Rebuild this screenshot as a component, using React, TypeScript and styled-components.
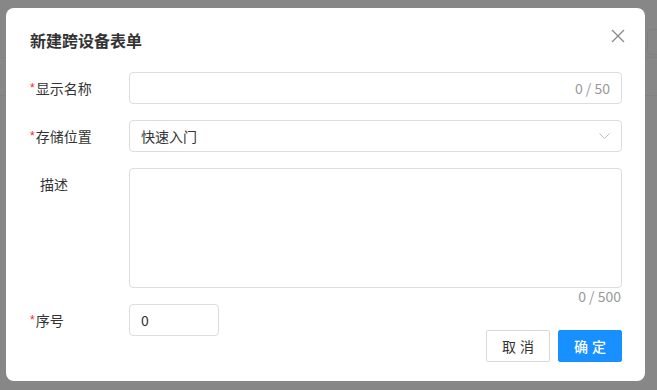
import React from 'react';
import styled, { createGlobalStyle } from 'styled-components';

const GlobalStyle = createGlobalStyle`
  html, body {
    margin: 0;
    padding: 0;
    width: 657px;
    height: 390px;
    overflow: hidden;
    font-family: "Noto Sans CJK SC", "Noto Sans", sans-serif;
  }
`;

const Page = styled.div`
  width: 657px;
  height: 390px;
  background: #878787;
  position: relative;
`;

const PageHeader = styled.div`
  height: 57px;
  border-bottom: 1px solid #818181;
`;

const PageBar = styled.div`
  height: 37px;
  border-bottom: 1px solid #818181;
`;

const HeaderButton = styled.div`
  position: absolute;
  left: 647px;
  top: 29px;
  width: 40px;
  height: 24px;
  border: 1px solid #808080;
  border-radius: 4px;
`;

const Overlay = styled.div`
  position: fixed;
  inset: 0;
  display: flex;
  align-items: flex-start;
  padding: 8px 0 0 6px;
`;

const Modal = styled.div`
  position: relative;
  width: 639px;
  height: 373px;
  box-sizing: border-box;
  background: #fff;
  border-radius: 8px;
  padding: 22px 23px 19px 24px;
  display: flex;
  flex-direction: column;
`;

const Title = styled.div`
  font-size: 16px;
  line-height: 20px;
  height: 20px;
  font-weight: 700;
  color: #333;
  margin-bottom: 22px;
`;

const Close = styled.button`
  position: absolute;
  right: 20px;
  top: 21px;
  width: 14px;
  height: 14px;
  padding: 0;
  border: 0;
  background: none;
  cursor: pointer;
  display: flex;
`;

const Row = styled.div<{ $gap?: number }>`
  display: grid;
  grid-template-columns: 99px 1fr;
  align-items: start;
  margin-bottom: ${(p) => (p.$gap ?? 16)}px;
`;

const Label = styled.label<{ $required?: boolean }>`
  display: flex;
  align-items: center;
  height: 32px;
  font-size: 14px;
  color: #333;
  padding-left: ${(p) => (p.$required ? 0 : 10)}px;
  white-space: nowrap;
`;

const Star = styled.span`
  color: #f5222d;
  font-size: 12px;
  line-height: 1;
  margin-right: 1px;
  font-family: "Liberation Sans", sans-serif;
`;

const Field = styled.div<{ $width?: number; $height?: number }>`
  box-sizing: border-box;
  width: ${(p) => (p.$width ? `${p.$width}px` : '100%')};
  height: ${(p) => p.$height ?? 32}px;
  border: 1px solid #dcdcdc;
  border-radius: 4px;
  display: flex;
  align-items: center;
  justify-content: space-between;
  padding: 0 11px 0 11px;
  font-size: 14px;
  color: #333;
`;

const Count = styled.span`
  color: #999;
  font-size: 14px;
`;

const Below = styled.div`
  text-align: right;
  line-height: 16px;
  height: 16px;
  color: #999;
  font-size: 14px;
  padding-right: 1px;
`;

const Bottom = styled.div`
  display: flex;
  justify-content: space-between;
  align-items: flex-end;
  height: 58px;
  margin-top: auto;
`;

const Buttons = styled.div`
  display: flex;
  gap: 8px;
`;

const Button = styled.button<{ $primary?: boolean }>`
  width: 64px;
  height: 32px;
  box-sizing: border-box;
  padding: 0 0 0 4px;
  border-radius: 2px;
  font-family: inherit;
  font-size: 14px;
  letter-spacing: 4px;
  cursor: pointer;
  border: 1px solid ${(p) => (p.$primary ? '#1890ff' : '#d9d9d9')};
  background: ${(p) => (p.$primary ? '#1890ff' : '#fff')};
  color: ${(p) => (p.$primary ? '#fff' : '#333')};
  font-weight: ${(p) => (p.$primary ? 500 : 400)};
`;

export default function App() {
  return (
    <>
      <GlobalStyle />
      <Page>
        <PageHeader />
        <PageBar />
        <HeaderButton />
        <Overlay>
          <Modal>
            <Title>新建跨设备表单</Title>
            <Close aria-label="close">
              <svg width="14" height="14" viewBox="0 0 14 14">
                <path d="M1 1L13 13M13 1L1 13" stroke="#888" strokeWidth="1.3" fill="none" />
              </svg>
            </Close>

            <Row>
              <Label $required>
                <Star>*</Star>显示名称
              </Label>
              <Field>
                <span />
                <Count>0 / 50</Count>
              </Field>
            </Row>

            <Row>
              <Label $required>
                <Star>*</Star>存储位置
              </Label>
              <Field>
                <span>快速入门</span>
                <svg width="11" height="6" viewBox="0 0 11 6">
                  <path d="M0.5 0.5L5.5 5.5L10.5 0.5" stroke="#bbb" strokeWidth="1" fill="none" />
                </svg>
              </Field>
            </Row>

            <Row $gap={0}>
              <Label>描述</Label>
              <div>
                <Field $height={120} />
                <Below>0 / 500</Below>
              </div>
            </Row>

            <Bottom>
              <Row $gap={26}>
                <Label $required>
                  <Star>*</Star>序号
                </Label>
                <Field $width={90}>
                  <span>0</span>
                </Field>
              </Row>
              <Buttons>
                <Button>取消</Button>
                <Button $primary>确定</Button>
              </Buttons>
            </Bottom>
          </Modal>
        </Overlay>
      </Page>
    </>
  );
}
